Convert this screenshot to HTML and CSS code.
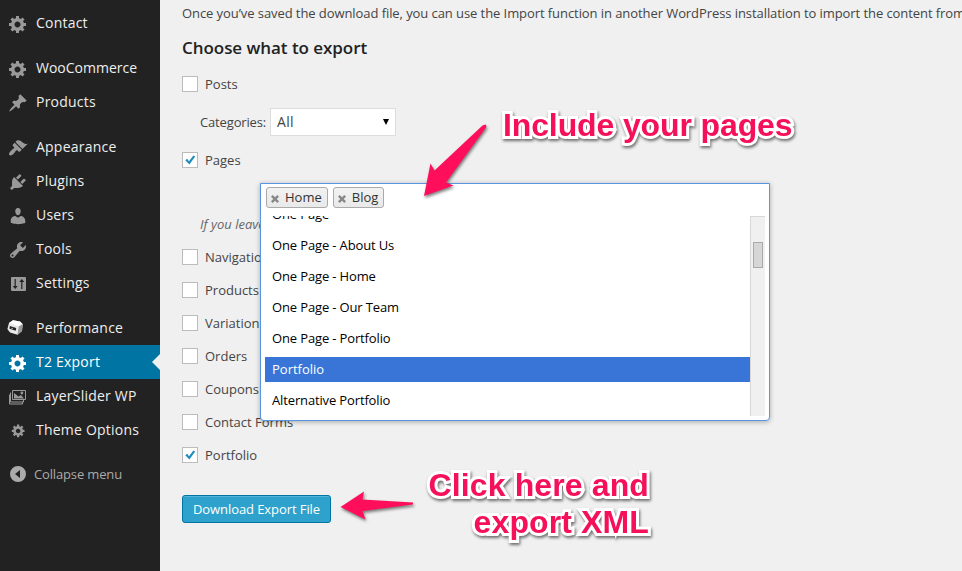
FILE: index.html
```html
<!DOCTYPE html>
<html lang="en">
<head>
<meta charset="utf-8">
<title>Export</title>
<link rel="stylesheet" href="styles.css">
</head>
<body>
<svg class="defs" width="0" height="0" aria-hidden="true">
  <symbol id="gear" viewBox="0 0 20 20"><path d="M18 12h-2.18c-.17.7-.44 1.35-.81 1.93l1.54 1.54-2.1 2.1-1.54-1.54c-.58.36-1.23.63-1.91.79V19H8v-2.18c-.68-.16-1.33-.43-1.91-.79l-1.54 1.54-2.12-2.12 1.54-1.54c-.36-.58-.63-1.23-.79-1.91H1V9.03h2.17c.16-.7.44-1.35.8-1.94L2.43 5.55l2.1-2.1 1.54 1.54c.58-.37 1.24-.64 1.93-.81V2h3v2.18c.68.16 1.33.43 1.91.79l1.54-1.54 2.12 2.12-1.54 1.54c.36.59.64 1.24.8 1.94H18V12zm-8.5 1.5c1.66 0 3-1.34 3-3s-1.34-3-3-3-3 1.34-3 3 1.34 3 3 3z"/></symbol>
  <symbol id="check" viewBox="0 0 14 14"><path d="M2.3 7.2 4.1 5.8 6 8.2 10.4 2.5 12.2 3.5 6.4 11.4Z"/></symbol>
  <symbol id="close" viewBox="0 0 8 8"><path d="M0 1.7 1.7 0 4 2.3 6.3 0 8 1.7 5.7 4 8 6.3 6.3 8 4 5.7 1.7 8 0 6.3 2.3 4Z"/></symbol>
</svg>
<div class="page">
  <nav class="menu">
    <a class="item"><svg><use href="#gear"/></svg>Contact</a>
    <div class="gap"></div>
    <a class="item tight"><svg><use href="#gear"/></svg>WooCommerce</a>
    <a class="item"><svg viewBox="0 0 20 20"><path d="M10.44 3.02l1.82-1.82 6.36 6.35-1.83 1.82c-1.05-.68-2.48-.57-3.41.36l-.75.75c-.92.93-1.04 2.35-.35 3.41l-1.83 1.82-2.41-2.41-2.8 2.79c-.42.42-3.38 2.71-3.8 2.29s1.86-3.39 2.28-3.81l2.79-2.79L4.1 9.36l1.83-1.82c1.05.69 2.48.57 3.4-.36l.75-.75c.93-.92 1.05-2.35.36-3.41z"/></svg>Products</a>
    <div class="gap"></div>
    <a class="item"><svg viewBox="0 0 20 20"><path d="M14.48 11.06L7.41 3.99l1.5-1.5c.5-.56 2.3-.47 3.51.32 1.21.8 1.43 1.28 2.91 2.1 1.18.64 2.45 1.26 4.45.85zm-.71.71L6.7 4.7 4.93 6.47c-.39.39-.39 1.02 0 1.41l1.06 1.06c.39.39.39 1.03 0 1.42-.6.6-1.43 1.11-2.21 1.69-.35.26-.7.53-1.01.84C1.43 14.23.4 16.08 1.4 17.07c.99 1 2.84-.03 4.18-1.36.31-.31.58-.66.85-1.02.57-.78 1.08-1.61 1.69-2.21.39-.39 1.02-.39 1.41 0l1.06 1.06c.39.39 1.02.39 1.41 0z"/></svg>Appearance</a>
    <a class="item"><svg viewBox="0 0 20 20"><path d="M13.11 4.36L9.87 7.6 8 5.73l3.24-3.24c.35-.34 1.05-.2 1.56.32.52.51.66 1.21.31 1.55zm-8 1.77l.91-1.12 9.01 9.01-1.19.84c-.71.71-2.63 1.16-3.82 1.16H6.14L4.9 17.26c-.59.59-1.54.59-2.12 0-.59-.58-.59-1.53 0-2.12l1.24-1.24v-3.88c0-1.13.4-3.19 1.09-3.89zm7.26 3.97l3.24-3.24c.34-.35 1.04-.21 1.55.31.52.51.66 1.21.31 1.55l-3.24 3.25z"/></svg>Plugins</a>
    <a class="item"><svg viewBox="0 0 20 20"><path d="M10 9.25c-2.27 0-2.73-3.44-2.73-3.44C7 4.02 7.82 2 9.97 2c2.16 0 2.98 2.02 2.71 3.81 0 0-.41 3.44-2.68 3.44zm0 2.57L12.72 10c2.39 0 4.52 2.33 4.52 4.53v2.49s-3.65 1.13-7.24 1.13c-3.65 0-7.24-1.13-7.24-1.13v-2.49c0-2.25 1.94-4.48 4.47-4.48z"/></svg>Users</a>
    <a class="item"><svg viewBox="0 0 20 20"><path d="M16.68 9.77c-1.34 1.34-3.3 1.67-4.95.99l-5.41 6.52c-.99.99-2.59.99-3.58 0s-.99-2.59 0-3.57l6.52-5.42c-.68-1.65-.35-3.61.99-4.95 1.28-1.28 3.12-1.62 4.72-1.06l-2.89 2.89 2.82 2.82 2.86-2.87c.53 1.58.18 3.39-1.08 4.65zM3.81 16.21c.4.39 1.04.39 1.43 0 .4-.4.4-1.04 0-1.43-.39-.4-1.03-.4-1.43 0-.39.39-.39 1.03 0 1.43z"/></svg>Tools</a>
    <a class="item"><svg viewBox="0 0 20 20"><path fill-rule="evenodd" d="M4 3h13q1 0 1 1v12q0 1-1 1H4q-1 0-1-1V4q0-1 1-1zM6.6 5v7H4.7l2.5 3 2.5-3H7.8V5zM13.2 15V8h-1.9l2.5-3 2.5 3h-1.9v7z"/></svg>Settings</a>
    <div class="gap"></div>
    <a class="item"><svg viewBox="0 0 20 20"><path fill="#e9e9e9" d="M1 4 5 1.2 12 2.5 14.7 5.5 14 12 9.5 15.8 2 13.5-.6 10z"/><path fill="#9a9a9a" d="M10.8 7.5 14.5 5 14 12 9.5 15.8z"/><path fill="#fff" d="M1 4 5 1.2 12 2.5 14.7 5 10.5 7z"/><path fill="#222" d="m1.8 7.1 6.4 1.8-.4 2.8-6.3-1.9z"/><path fill="#ccc" d="m3.4 8.7 1.5.4-.3.9-1.4-.4z"/></svg>Performance</a>
    <a class="item current"><svg><use href="#gear"/></svg>T2 Export</a>
    <a class="item"><svg class="outline" viewBox="0 0 20 20"><path d="M4.5 3.500h13v9h-13zM2.500 5.500v9.500h13v-2M1.500 7.500v9.500h13v-2"/><path class="solid" d="M6 11.500V6l4.500 3.500L13 8l3 3.500zM12.500 6a1.400 1.400 0 1 0 2.800 0 1.400 1.400 0 1 0-2.800 0"/></svg>LayerSlider WP</a>
    <a class="item"><svg class="small"><use href="#gear"/></svg>Theme Options</a>
    <a class="item collapse"><svg viewBox="0 0 20 20"><path fill-rule="evenodd" d="M10 2a8 8 0 1 1 0 16 8 8 0 0 1 0-16zM12 6 7 10l5 4z"/></svg>Collapse menu</a>
  </nav>
  <main class="content">
    <p class="intro">Once you’ve saved the download file, you can use the Import function in another WordPress installation to import the content from</p>
    <h3>Choose what to export</h3>
    <label class="row"><span class="box"></span>Posts</label>
    <div class="categories">Categories: <span class="select">All<svg viewBox="0 0 6 6"><path d="M0 0h6L3 6z"/></svg></span></div>
    <label class="row pages"><span class="box"><svg><use href="#check"/></svg></span>Pages</label>
    <div class="picker">
      <p class="hint">If you leave</p>
      <div class="chosen">
        <ul class="tags">
          <li><svg><use href="#close"/></svg>Home</li>
          <li><svg><use href="#close"/></svg>Blog</li>
        </ul>
        <div class="results">
          <ul class="options">
            <li>One Page</li>
            <li>One Page - About Us</li>
            <li>One Page - Home</li>
            <li>One Page - Our Team</li>
            <li>One Page - Portfolio</li>
            <li class="active">Portfolio</li>
            <li>Alternative Portfolio</li>
          </ul>
          <div class="track"><div class="thumb"></div></div>
        </div>
      </div>
    </div>
    <div class="types">
      <label class="row"><span class="box"></span>Navigation</label>
      <label class="row"><span class="box"></span>Products</label>
      <label class="row"><span class="box"></span>Variations</label>
      <label class="row"><span class="box"></span>Orders</label>
      <label class="row"><span class="box"></span>Coupons</label>
      <label class="row"><span class="box"></span>Contact Forms</label>
      <label class="row"><span class="box"><svg><use href="#check"/></svg></span>Portfolio</label>
    </div>
    <button class="download">Download Export File</button>
  </main>
  <svg class="arrows" viewBox="0 0 962 571"><path d="M485.5 124.5Q487 126 486 127.5L446 182.5 453.5 185.5 424 196 430.5 163.5 434.5 170.5 482.5 125.5ZM340.5 507 364 491.5 362.5 499.5 413 502.5V504.5L362.5 511 365.5 519.5Z"/></svg>
  <div class="note note-pages">Include your pages</div>
  <div class="note note-export"><div>Click here and</div><div>export XML</div></div>
</div>
</body>
</html>
```
FILE: styles.css
```css
* { box-sizing: border-box; }
body {
  margin: 0;
  background: #f0f0f0;
  color: #444;
  font: 13px/20px "Open Sans", sans-serif;
}
p, h3, ul { margin: 0; padding: 0; list-style: none; }
.defs { position: absolute; }
.page {
  position: relative;
  display: flex;
  width: 962px;
  height: 571px;
  overflow: hidden;
}

.menu {
  flex: none;
  width: 160px;
  padding-top: 6px;
  background: #222;
}
.item {
  position: relative;
  display: flex;
  align-items: center;
  gap: 8px;
  height: 34px;
  padding: 0 8px;
  color: #eee;
  font-size: 14px;
  letter-spacing: .22px;
  white-space: nowrap;
}
.tight { letter-spacing: 0; }
.item svg {
  flex: none;
  width: 20px;
  height: 20px;
  margin-top: 2px;
  fill: #999;
  overflow: visible;
}
.gap { height: 11px; }
.current { background: #0074a2; color: #fff; }
.current svg { fill: #fff; }
.current::after {
  content: "";
  position: absolute;
  right: 0;
  top: 9px;
  border: 8px solid transparent;
  border-left: 0;
  border-right-color: #f0f0f0;
}
.item .outline { fill: none; stroke: #999; stroke-width: 1; }
.item .solid { fill: #999; stroke: none; }
.item .small { width: 15px; height: 15px; margin: 0 2px 0 3px; }
.collapse {
  margin-top: 10px;
  gap: 6px;
  color: #aaa;
  font-size: 13px;
  letter-spacing: -.15px;
}
.collapse svg { margin-top: 0; fill: #aaa; }

.content { flex: 1; min-width: 0; padding: 3px 0 0 22px; }
.intro { letter-spacing: -.075px; white-space: nowrap; }
h3 {
  margin-top: 13px;
  color: #222;
  font-size: 17px;
  font-weight: 600;
  line-height: 24px;
  letter-spacing: -.05px;
}
.row { display: flex; align-items: center; gap: 7px; height: 20px; }
h3 + .row { margin-top: 14px; }
.box {
  flex: none;
  width: 16px;
  height: 16px;
  border: 1px solid #bbb;
  background: #fff;
}
.box svg { display: block; width: 14px; height: 14px; fill: #1e8cbe; }
.categories {
  display: flex;
  align-items: center;
  gap: 4px;
  margin: 14px 0 14px 18px;
  letter-spacing: -.15px;
}
.select {
  display: flex;
  align-items: center;
  justify-content: space-between;
  width: 126px;
  height: 28px;
  padding: 0 6px;
  border: 1px solid #ddd;
  background: #fff;
  font-size: 14px;
  letter-spacing: .3px;
}
.select svg { width: 6px; height: 6px; fill: #000; }

.picker { position: relative; padding: 44px 0 13px 18px; }
.hint { font-style: italic; color: #666; }
.chosen {
  position: absolute;
  z-index: 1;
  left: 78px;
  top: 13px;
  width: 510px;
  height: 238px;
  padding: 4px;
  border: 1px solid #5897e0;
  border-radius: 0 0 4px 4px;
  background: #fff;
  box-shadow: 0 1px 5px rgba(0, 0, 0, .3);
}
.tags { display: flex; gap: 5px; height: 28px; padding-left: 1px; }
.tags li {
  display: flex;
  align-items: center;
  gap: 6px;
  height: 21px;
  margin-top: -1px;
  padding: 0 5px 2px 4px;
  border: 1px solid #aaa;
  border-radius: 3px;
  background: linear-gradient(#f2f2f2, #e9e9e9);
  color: #333;
}
.tags svg { width: 8px; height: 8px; margin-top: 4px; fill: #888; }
.results { display: flex; height: 200px; overflow: hidden; }
.options { flex: 1; margin-top: -14px; color: #000; letter-spacing: -.14px; }
.options li { height: 25px; margin-bottom: 6px; padding: 0 7px; line-height: 25px; }
.options .active { background: #3875d7; color: #fff; letter-spacing: 0; }
.track {
  width: 15px;
  padding: 25px 2px 0;
  border-top: 1px solid #d8d8d8;
  border-left: 1px solid #d8d8d8;
  background: #f0f0f0;
}
.thumb { width: 10px; height: 26px; border: 1px solid #aaa; background: #d6d6d6; }

.types { display: flex; flex-direction: column; gap: 13px; }
.download {
  display: block;
  width: 149px;
  height: 28px;
  margin-top: 30px;
  padding: 0;
  border: 1px solid #0074a2;
  border-radius: 3px;
  background: #2ea2cc;
  box-shadow: inset 0 1px 0 rgba(120, 200, 230, .5);
  color: #fff;
  font: 13px/26px "Open Sans", sans-serif;
  letter-spacing: -.08px;
}

.arrows {
  position: absolute;
  inset: 0;
  z-index: 2;
  fill: #ff0f5b;
  filter: drop-shadow(1px 2px 1.5px rgba(0, 0, 0, .5));
  pointer-events: none;
}
.note {
  position: absolute;
  z-index: 3;
  color: #f5105a;
  font: bold 32px/37px "Liberation Sans", sans-serif;
  text-align: right;
  white-space: nowrap;
  -webkit-text-stroke: 6px #fff;
  paint-order: stroke fill;
  stroke-linejoin: round;
  filter: drop-shadow(1px 2px 1.5px rgba(0, 0, 0, .55));
}
.note-pages { left: 503px; top: 107px; letter-spacing: -.12px; }
.note-export { right: 313px; top: 467px; letter-spacing: .12px; }
```
